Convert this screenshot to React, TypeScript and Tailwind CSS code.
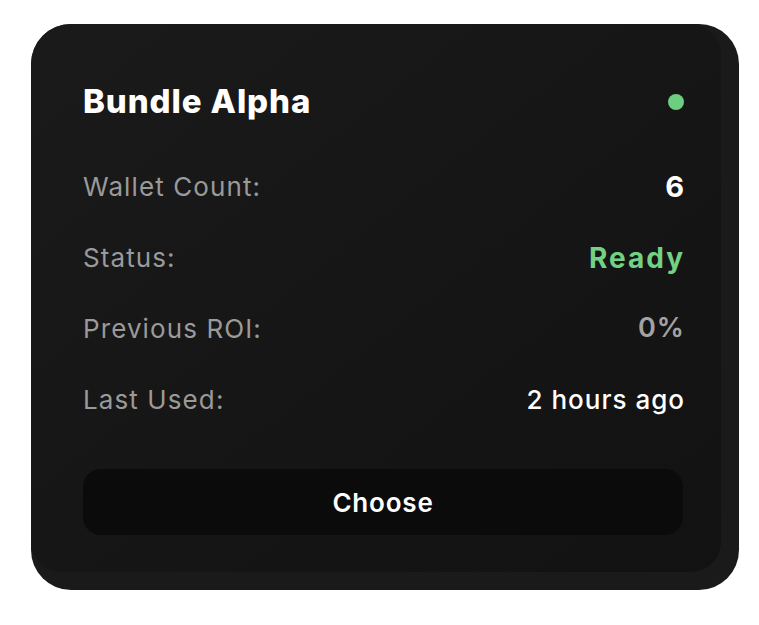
import React from "react";

const rows: { label: string; value: string; cls: string }[] = [
  { label: "Wallet Count:", value: "6", cls: "text-white font-bold text-[29px] tracking-[1px]" },
  { label: "Status:", value: "Ready", cls: "text-[#72d183] font-bold text-[28px] tracking-[2px]" },
  { label: "Previous ROI:", value: "0%", cls: "text-[#a3a3a3] font-semibold text-[27px] tracking-[1px]" },
  { label: "Last Used:", value: "2 hours ago", cls: "text-white font-medium text-[26px] tracking-[1px]" },
];

export default function App() {
  return (
    <div
      className="min-h-screen bg-white pt-[24px] pl-[31px]"
      style={{ fontFamily: "Inter, 'Noto Sans', sans-serif" }}
    >
      <div className="w-[708px] h-[566px] rounded-[40px] bg-[#1a1a1a] pr-[18px] pb-[18px]">
        <div className="h-full rounded-[40px] rounded-br-[30px] rounded-tr-[30px] rounded-bl-[30px] bg-gradient-to-br from-[#1a1a1a] via-[#161616] to-[#121212] pl-[52px] pr-[38px] pt-[58px]">
          <div className="flex h-[40px] items-center justify-between">
            <h1 className="text-[33px] font-extrabold tracking-[0.9px] text-white">Bundle Alpha</h1>
            <span className="mr-[-1px] h-[16px] w-[16px] rounded-full bg-[#6ccf7f]" />
          </div>
          <div className="mt-[29px] flex flex-col">
            {rows.map((r) => (
              <div key={r.label} className="flex h-[71px] items-center justify-between">
                <span className="text-[26px] tracking-[1.1px] text-[#9a9a9a]">{r.label}</span>
                <span className={`mr-[-2px] ${r.cls}`}>{r.value}</span>
              </div>
            ))}
          </div>
          <button className="mt-[34px] flex h-[66px] w-full items-center justify-center rounded-[18px] bg-[#0b0b0b] text-[26px] font-semibold tracking-[0.8px] text-white">
            Choose
          </button>
        </div>
      </div>
    </div>
  );
}
